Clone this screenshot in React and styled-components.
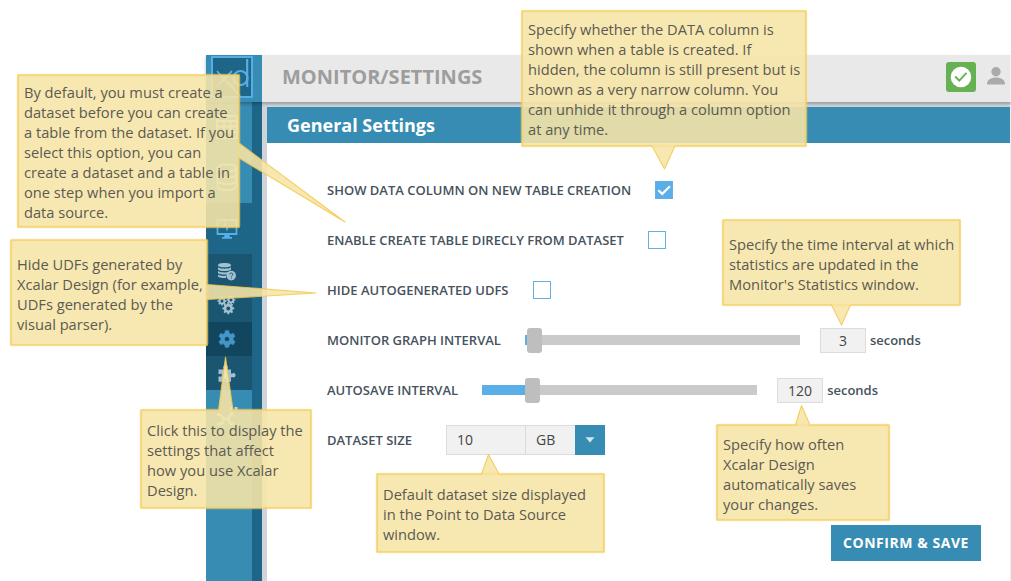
import React from "react";
import styled, { createGlobalStyle, css } from "styled-components";

const GlobalStyle = createGlobalStyle`
  * { box-sizing: border-box; }
  body { margin: 0; background: #fff; font-family: "Open Sans", sans-serif; }
`;

const Stage = styled.div`
  position: relative;
  width: 1011px;
  height: 581px;
  padding: 55px 0 0 206px;
  overflow: hidden;
`;

const Application = styled.div`
  height: 526px;
  width: 805px;
  display: flex;
  flex-direction: column;
`;

const Header = styled.header`
  position: relative;
  z-index: 1;
  height: 47px;
  flex: none;
  display: flex;
  align-items: center;
  background: #e9e9e9;
  border-right: 1px solid #f3f3f3;
  box-shadow: 0 2px 3px rgba(0, 20, 30, 0.3);
`;

const LogoCell = styled.div`
  width: 56px;
  height: 47px;
  padding: 1px 0 0 5px;
  background: #378cb4;
`;

const LogoBox = styled.div`
  width: 42px;
  height: 42px;
  border: 2px solid #57aee6;
  background: #1d6688;
  svg { display: block; }
`;

const AreaTitle = styled.h1`
  margin: -5px auto 0 20px;
  font-size: 20px;
  font-weight: 700;
  color: #9d9d9d;
`;

const StatusBadge = styled.div`
  width: 30px;
  height: 30px;
  margin-top: -4px;
  border-radius: 3px;
  background: #65b153;
  svg { display: block; }
`;

const UserIcon = styled.svg`
  width: 18px;
  height: 18px;
  margin: -5px 5px 0 11px;
  fill: #aaa;
`;

const Body = styled.div`
  flex: 1;
  display: flex;
`;

const Sidebar = styled.nav`
  width: 56px;
  background: #1d6688;
`;

const tabTones = {
  light: css`background: #378cb4; color: #b5d6e6;`,
  dark: css`background: #1d6688; color: #57aee6;`,
  sub: css`background: #1a5671; color: #a3c2cf;`,
  active: css`background: #12465e; color: #4396c8;`,
};

const Tab = styled.div`
  width: 46px;
  height: ${(p) => p.$height}px;
  padding: ${(p) => p.$drop ?? 0}px 4px 0 0;
  display: flex;
  align-items: center;
  justify-content: center;
  ${(p) => tabTones[p.$tone]}
  ${(p) => p.$divided && css`border-bottom: 1px solid #3283a9;`}
`;

const Glyph = styled.svg`
  display: block;
  width: 20px;
  height: 20px;
  overflow: visible;
`;

const Panel = styled.main`
  flex: 1;
  display: flex;
  flex-direction: column;
  border-left: 5px solid #d0d4d9;
  border-right: 1px solid #f0f0f0;
  background: #fff;
`;

const PanelTitle = styled.h2`
  height: 41px;
  margin: 0;
  padding: 0 0 0 20px;
  border-top: 5px solid #d0d6d9;
  background: #378cb4;
  color: #fff;
  font-size: 18px;
  line-height: 36px;
  font-weight: 700;
`;

const Settings = styled.section`
  padding: 22px 29px 0 60px;
  display: flex;
  flex-direction: column;
`;

const Row = styled.div`
  height: 50px;
  display: flex;
  align-items: center;
`;

const Label = styled.span`
  margin-right: ${(p) => p.$gap ?? 24}px;
  font-size: 13px;
  font-weight: 600;
  line-height: 18px;
  color: #46525c;
  white-space: nowrap;
`;

const Checkbox = styled.span`
  width: 18px;
  height: 18px;
  border: 1px solid #62b0e8;
  background: ${(p) => (p.$checked ? "#5aafe8" : "#fff")};
  svg { display: block; margin: -1px; }
`;

const Track = styled.div`
  width: 275px;
  height: 10px;
  display: flex;
  align-items: center;
  background: #cacaca;
`;

const TrackFill = styled.div`
  width: ${(p) => p.$width}px;
  height: 10px;
  background: #5aafe8;
`;

const Thumb = styled.div`
  width: 15px;
  height: 25px;
  border-radius: 3px;
  background: #bebebe;
`;

const ValueBox = styled.div`
  width: 46px;
  height: 25px;
  margin: 0 4px 0 20px;
  border: 1px solid #dcdcdc;
  background: #f1f1f1;
  color: #444;
  font-size: 14px;
  line-height: 24px;
  text-align: center;
`;

const SizeField = styled.div`
  height: 30px;
  display: flex;
  border: 1px solid #dcdcdc;
  border-right: 0;
  background: #f1f1f1;
  color: #444;
  font-size: 14px;
  line-height: 28px;
`;

const SizeAmount = styled.div`
  width: 78px;
  padding-left: 10px;
`;

const SizeUnit = styled.div`
  width: 50px;
  padding-left: 10px;
  border-left: 1px solid #dcdcdc;
`;

const DropButton = styled.div`
  width: 30px;
  height: 30px;
  background: #378cb4;
  svg { display: block; }
`;

const SaveButton = styled.button`
  align-self: flex-end;
  width: 150px;
  height: 36px;
  margin-top: 60px;
  padding: 0 0 2px;
  border: 0;
  background: #378cb4;
  color: #fff;
  font: 700 14px "Open Sans", sans-serif;
  letter-spacing: 0.55px;
`;

const CalloutBox = styled.aside`
  position: absolute;
  left: ${(p) => p.$x}px;
  top: ${(p) => p.$y}px;
  width: ${(p) => p.$w}px;
  height: ${(p) => p.$h}px;
  z-index: 2;
`;

const Bubble = styled.svg`
  position: absolute;
  left: 0;
  top: 0;
  width: 100%;
  height: 100%;
  overflow: visible;
  path { stroke-linejoin: round; }
`;

const CalloutText = styled.p`
  position: relative;
  margin: 0;
  padding: ${(p) => p.$top}px 0 0 6px;
  color: #5c5a52;
  font-size: 14.667px;
  line-height: 20px;
  white-space: pre;
`;

/* The tail leaves one side of the box between a and b and ends at tip. */
function outline(w, h, { side, a, b, tip }) {
  const t = `L${tip[0]} ${tip[1]}`;
  const top = side === "top" ? `L${a} 0 ${t} L${b} 0` : "";
  const right = side === "right" ? `L${w} ${a} ${t} L${w} ${b}` : "";
  const bottom = side === "bottom" ? `L${b} ${h} ${t} L${a} ${h}` : "";
  return `M0 0 ${top} L${w} 0 ${right} L${w} ${h} ${bottom} L0 ${h}Z`;
}

const callouts = [
  {
    x: 18, y: 75, w: 221, h: 152, top: 7,
    tail: { side: "right", a: 68, b: 83, tip: [327, 147] },
    lines: ["By default, you must create a", "dataset before you can create", "a table from the dataset. If you", "select this option, you can", "create a dataset and a table in", "one step when you import a", "data source."],
  },
  {
    x: 11, y: 240, w: 196, h: 105, top: 14,
    tail: { side: "right", a: 44.5, b: 59.5, tip: [305, 53] },
    lines: ["Hide UDFs generated by", "Xcalar Design (for example,", "UDFs generated by the", "visual parser)."],
  },
  {
    x: 141, y: 410, w: 170, h: 98, top: 10,
    tail: { side: "top", a: 77.5, b: 92, tip: [84.5, -53] },
    lines: ["Click this to display the", "settings that affect", "how you use Xcalar", "Design."],
  },
  {
    x: 522, y: 11, w: 284, h: 135, top: 8,
    tail: { side: "bottom", a: 130, b: 153, tip: [142.5, 23] },
    lines: ["Specify whether the DATA column is", "shown when a table is created. If", "hidden, the column is still present but is", "shown as a very narrow column. You", "can unhide it through a column option", "at any time."],
  },
  {
    x: 723, y: 220, w: 237, h: 85, top: 14,
    tail: { side: "bottom", a: 108.5, b: 127.5, tip: [118.5, 20] },
    lines: ["Specify the time interval at which", "statistics are updated in the", "Monitor's Statistics window."],
  },
  {
    x: 717, y: 425, w: 172, h: 95, top: 9,
    tail: { side: "top", a: 78.5, b: 93, tip: [84.5, -19.5] },
    lines: ["Specify how often", "Xcalar Design", "automatically saves", "your changes."],
  },
  {
    x: 377, y: 474, w: 227, h: 78, top: 10,
    tail: { side: "top", a: 104.5, b: 122, tip: [111.5, -19.5] },
    lines: ["Default dataset size displayed", "in the Point to Data Source", "window."],
  },
];

function Callout({ x, y, w, h, top, tail, lines }) {
  const placed = tail.side === "bottom" ? { ...tail, tip: [tail.tip[0], h + tail.tip[1]] } : tail;
  const d = outline(w, h, placed);
  return (
    <CalloutBox $x={x} $y={y} $w={w} $h={h}>
      <Bubble>
        <path d={d} fill="#f6e5a7" fillOpacity="0.89" />
        <rect x="0" y="0" width={w} height={h} rx="1" fill="none" stroke="#f8dc83" strokeOpacity="0.5" strokeWidth="2.6" />
        <path d={d} fill="none" stroke="#f3c84c" strokeOpacity="0.85" strokeWidth="1.1" />
      </Bubble>
      <CalloutText $top={top}>{lines.join("\n")}</CalloutText>
    </CalloutBox>
  );
}

/* Toothed wheel: outer radius R, root radius r, hole radius k. */
function gearPath(cx, cy, R, r, k, teeth) {
  const pts = [];
  const step = (Math.PI * 2) / teeth;
  for (let i = 0; i < teeth; i++) {
    const m = i * step - Math.PI / 2;
    [[-0.3, r], [-0.2, R], [0.2, R], [0.3, r]].forEach(([o, q]) => {
      pts.push(`${(cx + q * Math.cos(m + o * step)).toFixed(2)} ${(cy + q * Math.sin(m + o * step)).toFixed(2)}`);
    });
  }
  return `M${pts.join("L")}Z M${cx - k} ${cy}a${k} ${k} 0 1 0 ${2 * k} 0a${k} ${k} 0 1 0 ${-2 * k} 0Z`;
}

const TableIcon = () => (
  <Glyph viewBox="0 0 20 20" fill="none" stroke="currentColor" strokeWidth="1.8">
    <path d="M0 -1H20V21H0Z M0 4H20 M0 9.5H20 M0 15H20 M7 4V21 M13.5 4V21" />
  </Glyph>
);

const DatabaseIcon = () => (
  <Glyph viewBox="0 0 20 20" fill="none" stroke="currentColor" strokeWidth="1.8">
    <ellipse cx="10" cy="0" rx="9.5" ry="3.6" />
    <path d="M.5 0v6c0 2 4 3.600 9.500 3.600s9.500-1.600 9.500-3.600V0 M.5 6v6.500c0 2 4 3.600 9.500 3.600s9.500-1.600 9.500-3.600V6 M.5 12.500v6c0 2 4 3.600 9.500 3.600s9.500-1.600 9.500-3.600v-6" />
  </Glyph>
);

const MonitorIcon = () => (
  <Glyph viewBox="0 0 20 20" fill="none" stroke="currentColor" strokeWidth="1.8">
    <path d="M.5 1H19.500V15H.5Z" />
    <path d="M3 8H7L8 4L10 11L11.500 7L12.500 8H17" strokeWidth="1.1" />
    <path d="M8 15h4l1 3h2v1.800H5V18h2Z" fill="currentColor" stroke="none" />
  </Glyph>
);

const DatasetHelpIcon = () => (
  <Glyph viewBox="0 0 20 20" fill="currentColor">
    <path d="M1 3.200C1 1.700 3.800 1 7.500 1S14 1.700 14 3.200 11.200 5.300 7.500 5.300 1 4.700 1 3.200Z" />
    <path d="M1 5.300c1.500 1.200 4 1.400 6.500 1.400S12.500 6.500 14 5.300V7.400c-1 1-4 1.500-6.500 1.500S2 8.400 1 7.400Z" />
    <path d="M1 9c1.500 1.200 4 1.400 6.500 1.400 1.500 0 3-.1 4.200-.4L9.600 12.400C6 12.800 2 12.200 1 11Z" />
    <path d="M1 12.500c1.500 1.300 5 1.600 8 1.300V16C6 16.400 2 15.800 1 14.600Z" />
    <circle cx="14.200" cy="13.600" r="4.800" />
    <path d="M12.700 12.500c0-2 3.200-1.900 3.200 0 0 1.100-1.500 1-1.500 2.200M14.400 15.700v1" fill="none" stroke="#1a5671" strokeWidth="1" />
  </Glyph>
);

const GearsIcon = () => (
  <Glyph viewBox="0 0 20 20" fill="currentColor" fillRule="evenodd">
    <path d={gearPath(5, 6, 4.6, 3.5, 1.5, 8)} />
    <path d={gearPath(14, 5, 4.4, 3.3, 1.4, 8)} />
    <path d={gearPath(11.3, 13.4, 6, 4.6, 2, 8)} />
  </Glyph>
);

const GearIcon = () => (
  <Glyph viewBox="0 0 20 20" fill="currentColor" fillRule="evenodd">
    <path d={gearPath(10, 10, 8.4, 6.2, 2.6, 6)} stroke="currentColor" strokeWidth=".8" strokeLinejoin="round" />
  </Glyph>
);

const PuzzleIcon = () => (
  <Glyph viewBox="0 0 20 20" fill="currentColor">
    <path d="M1.500 4.500H6c.9 0 .8-.7.500-1.300-.8-1.700.3-3.200 2-3.200s2.800 1.500 2 3.200c-.3.600-.4 1.300.5 1.300h3v3.300c0 1 .8 1 1.500.6 1.500-.8 3 .1 3 1.800s-1.500 2.700-3 1.900c-.7-.4-1.500-.3-1.500.6V16.700H9.800c-.9 0-.8-.7-.5-1.300.5-1.100-.1-2-1.300-2s-1.800.9-1.300 2c.3.600.4 1.300-.5 1.300H1.500V12c0-.9.7-.8 1.300-.5 1.200.5 2-.1 2-1.300s-.8-1.700-2-1.200c-.6.300-1.300.4-1.300-.5Z" />
  </Glyph>
);

const FlowIcon = () => (
  <Glyph viewBox="0 0 20 20" fill="none" stroke="currentColor" strokeWidth="2.200">
    <path d="M2 7.500c5 0 1 4.500 7 4.500s2-5 6-5 M9 12c-5 0-1 5-6 5 M9 12c5 0 2 5 6 5" />
    <path d="M13 0h3v3h-3Z M17.500 0h3v3h-3Z M13 5h3.500v3.500H13Z M0 6h3v3H0Z M0 15.500h3v3H0Z M14.500 15.500h3v3h-3Z" fill="currentColor" stroke="none" />
  </Glyph>
);

const tabs = [
  { Icon: TableIcon, height: 50, tone: "light", divided: true },
  { Icon: DatabaseIcon, height: 51, tone: "light" },
  { Icon: MonitorIcon, height: 51, tone: "dark" },
  { Icon: DatasetHelpIcon, height: 34, tone: "sub", drop: 2 },
  { Icon: GearsIcon, height: 34, tone: "sub" },
  { Icon: GearIcon, height: 34, tone: "active" },
  { Icon: PuzzleIcon, height: 34, tone: "sub", drop: 4 },
  { Icon: FlowIcon, height: 51, tone: "light", drop: 4, divided: true },
  { height: 140, tone: "light" },
];

const checks = [
  { label: "SHOW DATA COLUMN ON NEW TABLE CREATION", checked: true },
  { label: "ENABLE CREATE TABLE DIRECLY FROM DATASET" },
  { label: "HIDE AUTOGENERATED UDFS" },
];

const sliders = [
  { label: "MONITOR GRAPH INTERVAL", fill: 2, value: "3" },
  { label: "AUTOSAVE INTERVAL", fill: 43, value: "120" },
];

export default function App() {
  return (
    <Stage>
      <GlobalStyle />
      <Application>
        <Header>
          <LogoCell>
            <LogoBox>
              <svg width="38" height="38" viewBox="0 0 38 38" fill="none" stroke="#57aee6" strokeWidth="1.800">
                <path d="M4 13L18 29M19 13L3.500 29M15 24L27 38" />
                <circle cx="27.500" cy="20" r="7" strokeWidth="2.200" />
                <path d="M34.200 1V29" strokeWidth="2.200" />
              </svg>
            </LogoBox>
          </LogoCell>
          <AreaTitle>MONITOR/SETTINGS</AreaTitle>
          <StatusBadge>
            <svg width="30" height="30" viewBox="0 0 30 30">
              <circle cx="15" cy="15" r="10.300" fill="#fff" />
              <path d="M9.200 14.500L13.300 18.700L20.500 10.800" fill="none" stroke="#65b153" strokeWidth="1.900" />
            </svg>
          </StatusBadge>
          <UserIcon viewBox="0 0 18 18">
            <circle cx="9" cy="4.700" r="4.700" />
            <path d="M0 17.500C0 12.500 4 10.500 9 10.500s9 2 9 7Z" />
          </UserIcon>
        </Header>
        <Body>
          <Sidebar>
            {tabs.map(({ Icon, height, tone, divided, drop }, i) => (
              <Tab key={i} $height={height} $tone={tone} $divided={divided} $drop={drop}>
                {Icon && <Icon />}
              </Tab>
            ))}
          </Sidebar>
          <Panel>
            <PanelTitle>General Settings</PanelTitle>
            <Settings>
              {checks.map(({ label, checked }) => (
                <Row key={label}>
                  <Label>{label}</Label>
                  <Checkbox $checked={checked}>
                    {checked && (
                      <svg width="18" height="18" viewBox="0 0 18 18" fill="none" stroke="#fff" strokeWidth="2.200">
                        <path d="M3.300 9.200L7.200 12.900L15 5.200" />
                      </svg>
                    )}
                  </Checkbox>
                </Row>
              ))}
              {sliders.map(({ label, fill, value }) => (
                <Row key={label}>
                  <Label>{label}</Label>
                  <Track>
                    <TrackFill $width={fill} />
                    <Thumb />
                  </Track>
                  <ValueBox>{value}</ValueBox>
                  <Label $gap={0}>seconds</Label>
                </Row>
              ))}
              <Row>
                <Label $gap={34}>DATASET SIZE</Label>
                <SizeField>
                  <SizeAmount>10</SizeAmount>
                  <SizeUnit>GB</SizeUnit>
                </SizeField>
                <DropButton>
                  <svg width="30" height="30" viewBox="0 0 30 30" fill="#d3e6ee">
                    <path d="M10.500 12.300H19.500L15 17.500Z" />
                  </svg>
                </DropButton>
              </Row>
              <SaveButton>CONFIRM &amp; SAVE</SaveButton>
            </Settings>
          </Panel>
        </Body>
      </Application>
      {callouts.map((c) => (
        <Callout key={c.lines[0]} {...c} />
      ))}
    </Stage>
  );
}
